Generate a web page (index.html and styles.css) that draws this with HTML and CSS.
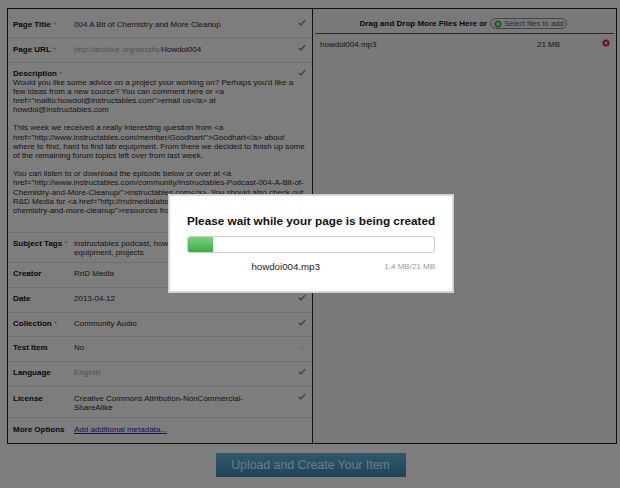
FILE: index.html
```html
<!DOCTYPE html>
<html lang="en">
<head>
    <meta charset="UTF-8">
    <title>Upload and Create Your Item</title>
    <link rel="stylesheet" href="styles.css">
</head>
<body>
    <div class="panel">
        <!-- Metadata form -->
        <div class="meta-col">
            <div class="row row-title">
                <div class="label">Page Title <span class="req">*</span></div>
                <div class="value">004 A Bit of Chemistry and More Cleanup</div>
                <svg class="check" viewBox="0 0 10 8"><path d="M1 4.5 L3.5 7 L9 1"/></svg>
            </div>
            <div class="row row-url">
                <div class="label">Page URL <span class="req">*</span></div>
                <div class="value"><span class="muted">http://archive.org/details/</span>Howdoi004</div>
                <svg class="check" viewBox="0 0 10 8"><path d="M1 4.5 L3.5 7 L9 1"/></svg>
            </div>
            <div class="row row-desc">
                <div class="desc">
                    <div class="label">Description <span class="req">*</span></div>
                    Would you like some advice on a project your working on? Perhaps you'd like a<br>
                    few ideas from a new source? You can comment here or &lt;a<br>
                    href="mailto:howdoi@instructables.com"&gt;email us&lt;/a&gt; at<br>
                    howdoi@instructables.com<br>
                    <br>
                    This week we received a really interesting question from &lt;a<br>
                    href="http://www.instructables.com/member/Goodhart/"&gt;Goodhart&lt;/a&gt; about<br>
                    where to find, hard to find lab equipment. From there we decided to finish up some<br>
                    of the remaining forum topics left over from last week.<br>
                    <br>
                    You can listen to or download the episode below or over at &lt;a<br>
                    href="http://www.instructables.com/community/Instructables-Podcast-004-A-Bit-of-<br>
                    Chemistry-and-More-Cleanup/"&gt;instructables.com&lt;/a&gt;. You should also check out<br>
                    R&amp;D Media for &lt;a href="http://rndmedialabs.com/"&gt;more<br>
                    chemistry-and-more-cleanup"&gt;resources from
                </div>
                <svg class="check" viewBox="0 0 10 8"><path d="M1 4.5 L3.5 7 L9 1"/></svg>
            </div>
            <div class="row row-tags">
                <div class="label">Subject Tags <span class="req">*</span></div>
                <div class="value">instructables podcast, how to, chemistry, lab<br>equipment, projects</div>
            </div>
            <div class="row">
                <div class="label">Creator</div>
                <div class="value">RnD Media</div>
            </div>
            <div class="row">
                <div class="label">Date</div>
                <div class="value">2013-04-12</div>
                <svg class="check" viewBox="0 0 10 8"><path d="M1 4.5 L3.5 7 L9 1"/></svg>
            </div>
            <div class="row">
                <div class="label">Collection <span class="req">*</span></div>
                <div class="value">Community Audio</div>
                <svg class="check" viewBox="0 0 10 8"><path d="M1 4.5 L3.5 7 L9 1"/></svg>
            </div>
            <div class="row">
                <div class="label">Test Item</div>
                <div class="value">No</div>
                <svg class="check faint" viewBox="0 0 10 8"><path d="M1 4.5 L3.5 7 L9 1"/></svg>
            </div>
            <div class="row">
                <div class="label">Language</div>
                <div class="value muted">English</div>
                <svg class="check" viewBox="0 0 10 8"><path d="M1 4.5 L3.5 7 L9 1"/></svg>
            </div>
            <div class="row row-license">
                <div class="label">License</div>
                <div class="value">Creative Commons Attribution-NonCommercial-<br>ShareAlike</div>
                <svg class="check" viewBox="0 0 10 8"><path d="M1 4.5 L3.5 7 L9 1"/></svg>
            </div>
            <div class="row row-last">
                <div class="label">More Options</div>
                <div class="value"><a href="#">Add additional metadata...</a></div>
            </div>
        </div>

        <!-- Files -->
        <div class="files-col">
            <div class="files-head">
                <b>Drag and Drop More Files Here or</b>
                <span class="select-btn">
                    <svg class="plus" viewBox="0 0 8 8"><circle cx="4" cy="4" r="3.5"/><path d="M4 2 V6 M2 4 H6"/></svg>
                    Select files to add
                </span>
            </div>
            <div class="file-row">
                <span class="file-name">howdoi004.mp3</span>
                <span class="file-size">21 MB</span>
                <svg class="remove" viewBox="0 0 8 8"><circle cx="4" cy="4" r="3.5"/><path d="M2.5 2.5 L5.5 5.5 M5.5 2.5 L2.5 5.5"/></svg>
            </div>
        </div>
    </div>

    <div class="actions">
        <button class="upload-btn">Upload and Create Your Item</button>
    </div>

    <!-- Progress dialog -->
    <div class="overlay">
        <div class="dialog">
            <h2>Please wait while your page is being created</h2>
            <div class="progress"><div class="progress-fill" style="width: 10%"></div></div>
            <div class="progress-info">
                <span class="progress-name">howdoi004.mp3</span>
                <span class="progress-size">1.4 MB/21 MB</span>
            </div>
        </div>
    </div>
</body>
</html>
```

FILE: styles.css
```css
html, body {
    height: 100%;
}
body {
    margin: 0;
    padding: 8px 3px 0 7px;
    box-sizing: border-box;
    width: 620px;
    height: 488px;
    overflow: hidden;
    background-color: #fdfdfd;
    font-family: "Liberation Sans", Arial, sans-serif;
    font-size: 8px;
    line-height: 9.15px;
    color: #2c2c2c;
}
.panel {
    display: flex;
    height: 436px;
    box-sizing: border-box;
    border: 1px solid #222;
}
.meta-col {
    width: 305px;
    box-sizing: border-box;
    border-right: 1px solid #222;
    background-color: #fafafa;
}
.files-col {
    flex: 1;
    background-color: #f2f2f2;
    padding: 0 2px;
}

/* Form rows */
.row {
    display: flex;
    align-items: flex-start;
    height: 24.8px;
    padding-top: 6px;
    box-sizing: border-box;
    border-bottom: 1px solid #ddd;
    padding-left: 5px;
    position: relative;
}
.row-title {
    height: 28.5px;
    padding-top: 11px;
}
.row-title .check {
    top: 10px;
}
.row-url {
    height: 25px;
    padding-top: 7px;
}
.row-desc {
    height: 170px;
}
.row-tags {
    height: 30.5px;
}
.row-license {
    height: 31px;
    padding-top: 7px;
}
.row-last {
    border-bottom: none;
    height: 25px;
    padding-top: 7px;
}
.label {
    width: 61px;
    flex-shrink: 0;
    font-weight: bold;
    color: #111;
}
.req {
    color: #999;
    font-weight: normal;
}
.value {
    flex: 1;
}
.desc {
    flex: 1;
    white-space: nowrap;
}
.muted {
    color: #aaa;
}
.check {
    position: absolute;
    right: 6px;
    top: 6px;
    width: 8px;
    height: 7px;
    fill: none;
    stroke: #777;
    stroke-width: 1.6;
}
.check.faint {
    stroke: #e4e4e4;
}
a {
    color: #2a1fb8;
}

/* File list */
.files-head {
    display: flex;
    justify-content: center;
    align-items: center;
    gap: 3px;
    height: 25px;
    box-sizing: border-box;
    padding-top: 5px;
    padding-right: 2px;
    border-bottom: 1px solid #555;
    color: #111;
}
.select-btn {
    display: flex;
    align-items: center;
    gap: 2px;
    height: 9px;
    padding: 0 3px;
    border: 1px solid #888;
    border-radius: 6px;
    font-size: 7.5px;
    color: #555;
    background-color: #f0f0f0;
}
.plus {
    width: 8px;
    height: 8px;
}
.plus circle {
    fill: #3cb04a;
}
.plus path {
    stroke: #fff;
    stroke-width: 1;
}
.file-row {
    display: flex;
    height: 20px;
    padding: 6px 4px 0 5px;
    box-sizing: border-box;
    border-bottom: 1px solid #eee;
    position: relative;
}
.file-name {
    width: 217px;
}
.remove {
    position: absolute;
    right: 4px;
    top: 5px;
    width: 8px;
    height: 8px;
}
.remove circle {
    fill: #d8232a;
}
.remove path {
    stroke: #fff;
    stroke-width: 1;
}

/* Bottom button */
.actions {
    display: flex;
    justify-content: center;
    padding-top: 9px;
    padding-right: 3px;
}
.upload-btn {
    width: 190px;
    height: 24px;
    border: none;
    background: linear-gradient(#5fb0d6, #3c87ad);
    font-family: inherit;
    font-size: 12.3px;
    color: #e4f0f6;
}

/* Dialog */
.overlay {
    position: absolute;
    left: 0;
    top: 0;
    width: 620px;
    height: 488px;
    background-color: rgba(0, 0, 0, 0.5);
}
.dialog {
    position: absolute;
    left: 169px;
    top: 195px;
    width: 284px;
    height: 97px;
    box-sizing: border-box;
    padding: 18px 17px 0 17px;
    background-color: #fff;
    border: 1px solid #ddd;
    box-shadow: 0 0 0 1px #ccc;
}
.dialog h2 {
    margin: 0;
    font-size: 11.75px;
    line-height: 13px;
    color: #111;
    white-space: nowrap;
}
.progress {
    height: 15px;
    margin-top: 9px;
    border: 1px solid #ccc;
    border-radius: 3px;
    overflow: hidden;
}
.progress-fill {
    height: 100%;
    background: linear-gradient(#7fd07f, #3aae45);
}
.progress-info {
    display: flex;
    margin-top: 8px;
    line-height: 12px;
}
.progress-name {
    flex: 1;
    text-align: center;
    font-size: 9.7px;
    color: #222;
}
.progress-size {
    font-size: 8px;
    color: #999;
}
```
